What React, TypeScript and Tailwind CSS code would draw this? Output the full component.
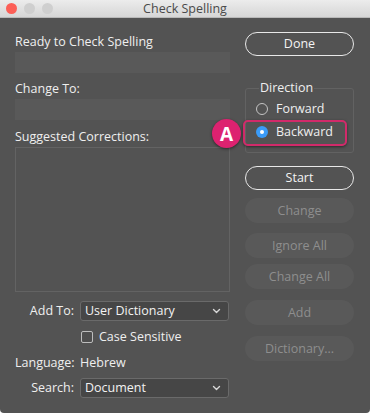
import React from 'react';

const ChevronDown = () => (
  <svg width="9" height="6" viewBox="0 0 9 6" fill="none" stroke="#d8d8d8" strokeWidth="1.4" strokeLinecap="round" strokeLinejoin="round">
    <path d="M1.5 1.5l3 3 3-3" />
  </svg>
);

const Select = ({ value }: { value: string }) => (
  <div className="flex h-[20px] w-[149px] items-center justify-between rounded-[3px] border border-[#6a6a6a] bg-[#464646] pl-[4px] pr-[7px] text-[#f2f2f2]">
    <span>{value}</span>
    <ChevronDown />
  </div>
);

const OutlineButton = ({ label, className = '' }: { label: string; className?: string }) => (
  <div className={`flex h-[24px] w-[109px] items-center justify-center rounded-full border-[1.5px] border-[#e8e8e8] text-[#f4f4f4] ${className}`}>
    {label}
  </div>
);

const DisabledButton = ({ label, className = '' }: { label: string; className?: string }) => (
  <div className={`flex h-[25px] w-[109px] items-center justify-center rounded-full bg-[#595959] text-[#8e8e8e] ${className}`}>
    {label}
  </div>
);

export default function App() {
  return (
    <div className="relative flex h-[413px] w-[370px] flex-col overflow-hidden bg-white font-['Open_Sans',sans-serif] text-[12.5px] font-medium leading-[16px]">
      {/* title bar */}
      <div className="relative flex h-[18px] items-center border-b border-[#b9b9b9] bg-gradient-to-b from-[#ececec] to-[#d6d6d6]">
        <div className="ml-[6px] flex gap-[7px]">
          <span className="size-[11px] rounded-full bg-[#fc5f57]" />
          <span className="size-[11px] rounded-full bg-[#cfcfcf]" />
          <span className="size-[11px] rounded-full bg-[#cfcfcf]" />
        </div>
        <div className="absolute inset-0 flex items-center justify-center text-[12.5px] font-normal text-[#4a4a4a]">Check Spelling</div>
      </div>

      {/* body */}
      <div className="flex flex-1 rounded-b-[4px] bg-[#535353] text-[#efefef]">
        {/* left column */}
        <div className="ml-[15px] flex w-[215px] flex-col pt-[16px]">
          <div>Ready to Check Spelling</div>
          <div className="mt-[2px] h-[21px] bg-[#595959]" />
          <div className="mt-[8px]">Change To:</div>
          <div className="mt-[2px] h-[21px] bg-[#595959]" />
          <div className="mt-[9px]">Suggested Corrections:</div>
          <div className="mt-[2px] h-[145px] border border-[#636363]" />

          <div className="mt-[9px] flex items-center">
            <span className="w-[65px] pr-[6px] text-right">Add To:</span>
            <Select value="User Dictionary" />
          </div>
          <div className="mt-[8px] flex h-[16px] items-center pl-[66px]">
            <span className="size-[12px] rounded-[2px] border border-[#bdbdbd] bg-[#4e4e4e]" />
            <span className="ml-[6px]">Case Sensitive</span>
          </div>
          <div className="mt-[10px] flex items-center">
            <span className="w-[65px] pr-[6px] text-right">Language:</span>
            <span>Hebrew</span>
          </div>
          <div className="mt-[7px] flex items-center">
            <span className="w-[65px] pr-[6px] text-right">Search:</span>
            <Select value="Document" />
          </div>
        </div>

        {/* right column */}
        <div className="ml-[15px] flex w-[109px] flex-col pt-[14px]">
          <OutlineButton label="Done" />
          <fieldset className="mt-[24px] h-[73px] rounded-[3px] border border-[#626262] px-[10px]">
            <legend className="ml-[3px] px-[1px] text-[#efefef]">Direction</legend>
            <div className="mt-[5px] flex items-center">
              <span className="size-[12px] rounded-full border border-[#c4c4c4]" />
              <span className="ml-[8px]">Forward</span>
            </div>
            <div className="mt-[7px] flex items-center">
              <span className="flex size-[12px] items-center justify-center rounded-full bg-[#3a9bf8]">
                <span className="size-[4px] rounded-full bg-white" />
              </span>
              <span className="ml-[8px]">Backward</span>
            </div>
          </fieldset>
          <OutlineButton label="Start" className="mt-[13px]" />
          <DisabledButton label="Change" className="mt-[8px]" />
          <DisabledButton label="Ignore All" className="mt-[10px]" />
          <DisabledButton label="Change All" className="mt-[6px]" />
          <DisabledButton label="Add" className="mt-[11px]" />
          <DisabledButton label="Dictionary..." className="mt-[11px]" />
        </div>
      </div>

      {/* annotation */}
      <div className="absolute left-[243px] top-[120px] h-[26px] w-[104px] rounded-[5px] border-2 border-[#d12a6a] shadow-[0_1px_3px_rgba(0,0,0,0.5)]" />
      <div className="absolute left-[212px] top-[119px] flex size-[29px] items-center justify-center rounded-full bg-[#dd2270] text-[19px] font-bold text-white shadow-[0_1px_3px_rgba(0,0,0,0.5)]">
        A
      </div>
    </div>
  );
}
